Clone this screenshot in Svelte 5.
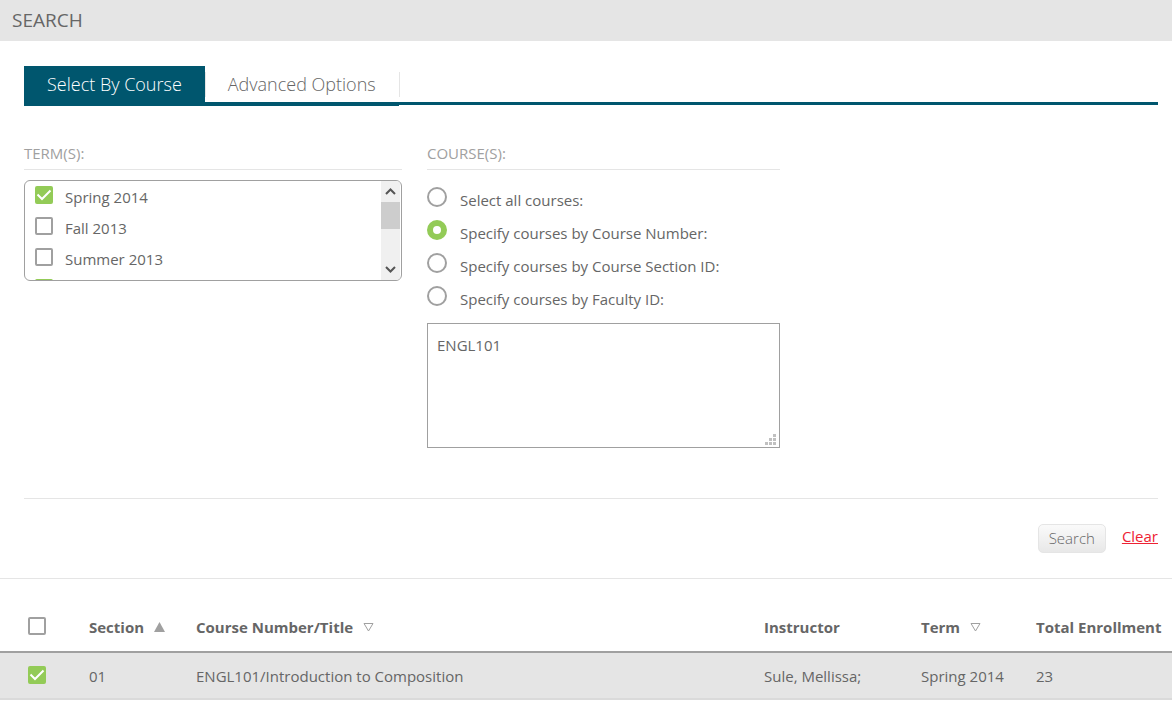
<script>
  let activeTab = $state('course');
  let searchBy = $state('number');
  let courseText = $state('ENGL101');

  const tabs = [
    { id: 'course', label: 'Select By Course' },
    { id: 'advanced', label: 'Advanced Options' }
  ];

  let terms = $state([
    { name: 'Spring 2014', checked: true },
    { name: 'Fall 2013', checked: false },
    { name: 'Summer 2013', checked: false },
    { name: 'Spring 2013', checked: true }
  ]);

  const searchOptions = [
    { value: 'all', label: 'Select all courses:' },
    { value: 'number', label: 'Specify courses by Course Number:' },
    { value: 'section', label: 'Specify courses by Course Section ID:' },
    { value: 'faculty', label: 'Specify courses by Faculty ID:' }
  ];

  const columns = [
    { key: 'section', label: 'Section', sort: 'asc' },
    { key: 'course', label: 'Course Number/Title', sort: 'none' },
    { key: 'instructor', label: 'Instructor' },
    { key: 'term', label: 'Term', sort: 'none' },
    { key: 'total', label: 'Total Enrollment' }
  ];

  let rows = $state([
    {
      section: '01',
      course: 'ENGL101/Introduction to Composition',
      instructor: 'Sule, Mellissa;',
      term: 'Spring 2014',
      total: 23,
      selected: true
    }
  ]);

  let allSelected = $state(false);

  function selectAll() {
    rows.forEach((row) => (row.selected = allSelected));
  }

  function clear(e) {
    e.preventDefault();
    courseText = '';
  }
</script>

{#snippet tick()}
  <svg class="tick" viewBox="0 0 18 18" aria-hidden="true">
    <path d="M2.500 8.500l4.500 4.500 8.500-8.500" />
  </svg>
{/snippet}

<header class="title-bar">
  <h1>SEARCH</h1>
</header>

<main>
  <form class="search" onsubmit={(e) => e.preventDefault()}>
    <div class="tab-bar">
      <div class="tabs" role="tablist">
        {#each tabs as tab}
          <button
            type="button"
            role="tab"
            class="tab"
            class:active={activeTab === tab.id}
            aria-selected={activeTab === tab.id}
            onclick={() => (activeTab = tab.id)}
          >{tab.label}</button>
        {/each}
      </div>
      <div class="tab-line"></div>
    </div>

    <div class="filters">
      <section class="terms">
        <h2>TERM(S):</h2>
        <div class="term-box">
          <div class="term-list">
            {#each terms as term}
              <label class="term">
                <span class="check">
                  <input type="checkbox" bind:checked={term.checked} />
                  {@render tick()}
                </span>
                <span>{term.name}</span>
              </label>
            {/each}
          </div>
          <div class="scrollbar" aria-hidden="true">
            <svg viewBox="0 0 19 21"><path d="M5 13l4.500-4.500 4.500 4.500" /></svg>
            <div class="thumb"></div>
            <svg class="down" viewBox="0 0 19 21"><path d="M5 8l4.500 4.500 4.500-4.500" /></svg>
          </div>
        </div>
      </section>

      <section class="courses">
        <h2 id="courses-title">COURSE(S):</h2>
        <div class="options" role="radiogroup" aria-labelledby="courses-title">
          {#each searchOptions as option}
            <label class="option">
              <input type="radio" name="searchBy" value={option.value} bind:group={searchBy} />
              <span>{option.label}</span>
            </label>
          {/each}
        </div>
        <div class="course-text">
          <textarea aria-labelledby="courses-title" spellcheck="false" bind:value={courseText}></textarea>
          <svg class="grip" viewBox="0 0 11 11" aria-hidden="true">
            <path d="M8 0h3v3h-3zM4 4h3v3h-3zM8 4h3v3h-3zM0 8h3v3h-3zM4 8h3v3h-3zM8 8h3v3h-3z" />
          </svg>
        </div>
      </section>
    </div>

    <div class="actions">
      <button type="submit" class="search-btn">Search</button>
      <a href="#clear" onclick={clear}>Clear</a>
    </div>
  </form>

  <table>
    <colgroup>
      <col class="col-check" />
      {#each columns as column}
        <col class="col-{column.key}" />
      {/each}
    </colgroup>
    <thead>
      <tr>
        <th>
          <span class="check">
            <input type="checkbox" aria-label="Select all" bind:checked={allSelected} onchange={selectAll} />
            {@render tick()}
          </span>
        </th>
        {#each columns as column}
          <th scope="col">
            <span class="heading">
              {column.label}
              {#if column.sort === 'asc'}
                <svg class="sort" viewBox="0 0 11 10"><path class="filled" d="M5.500 0l5.500 10h-11z" /></svg>
              {:else if column.sort}
                <svg class="sort" viewBox="0 0 11 10"><path d="M1 1.500h9l-4.500 7.500z" /></svg>
              {/if}
            </span>
          </th>
        {/each}
      </tr>
    </thead>
    <tbody>
      {#each rows as row}
        <tr class:selected={row.selected}>
          <td>
            <span class="check">
              <input type="checkbox" aria-label="Select section {row.section}" bind:checked={row.selected} />
              {@render tick()}
            </span>
          </td>
          {#each columns as column}
            <td>{row[column.key]}</td>
          {/each}
        </tr>
      {/each}
    </tbody>
  </table>
</main>

<style>
  :global(body) {
    background: #fff;
    color: #666;
    font-family: 'Open Sans', 'Noto Sans', sans-serif;
    font-size: 15px;
    line-height: 20px;
  }

  .title-bar {
    background: #e5e5e5;
    padding: 8px 12px 9px;
  }

  h1 {
    margin: 0;
    font-size: 19px;
    line-height: 24px;
    font-weight: 400;
  }

  .search {
    padding: 25px 14px 25px 24px;
    border-bottom: 1px solid #e5e5e5;
  }

  /* tabs */
  .tab-bar {
    display: flex;
  }

  .tabs {
    display: flex;
    align-items: flex-end;
    border-bottom: 4px solid #00566e;
  }

  .tab {
    position: relative;
    height: 36px;
    padding: 0 23px;
    border: 0;
    background: none;
    color: #666;
    font-family: inherit;
    font-size: 18px;
    font-weight: 300;
    cursor: pointer;
  }

  .tab::after {
    content: '';
    position: absolute;
    top: 6px;
    right: -1px;
    width: 1px;
    height: 25px;
    background: #e5e5e5;
  }

  .tab.active {
    background: #00566e;
    color: #fff;
  }

  .tab-line {
    flex: 1;
    height: 36px;
    border-bottom: 3px solid #00566e;
  }

  /* filters */
  .filters {
    display: flex;
    gap: 25px;
    padding: 36px 0 50px;
    border-bottom: 1px solid #e5e5e5;
  }

  .terms {
    flex: 0 1 378px;
  }

  .courses {
    flex: 0 1 353px;
  }

  h2 {
    margin: 0 0 10px;
    padding: 1px 0 6px;
    border-bottom: 1px solid #e5e5e5;
    color: #a0a0a0;
    font-size: 15px;
    line-height: 20px;
    font-weight: 400;
  }

  .term-box {
    display: flex;
    box-sizing: border-box;
    height: 101px;
    border: 1px solid #a0a0a0;
    border-radius: 6px;
    overflow: hidden;
  }

  .term-list {
    flex: 1;
    padding: 5px 10px;
    overflow-y: auto;
    scrollbar-width: none;
  }

  .term {
    display: flex;
    gap: 12px;
    height: 31px;
    line-height: 22px;
  }

  .check {
    position: relative;
    display: block;
    width: 18px;
    height: 18px;
  }

  .check input {
    appearance: none;
    display: block;
    box-sizing: border-box;
    width: 18px;
    height: 18px;
    margin: 0;
    border: 2px solid #a0a0a0;
    border-radius: 2px;
    background: #fff;
  }

  .check input:checked {
    border-color: #93cb57;
    background: #93cb57;
  }

  .tick {
    position: absolute;
    inset: 0;
    display: none;
    pointer-events: none;
    fill: none;
    stroke: #fff;
    stroke-width: 2;
  }

  .check input:checked + .tick {
    display: block;
  }

  .scrollbar {
    display: flex;
    flex-direction: column;
    width: 19px;
    margin-right: 1px;
    background: #f0f0f0;
  }

  .scrollbar svg {
    width: 19px;
    height: 21px;
    fill: none;
    stroke: #555;
    stroke-width: 2;
  }

  .scrollbar .down {
    margin-top: auto;
  }

  .thumb {
    height: 27px;
    background: #cdcdcd;
  }

  .options {
    padding: 7px 0 4px;
  }

  .option {
    display: flex;
    gap: 13px;
    height: 33px;
    line-height: 26px;
  }

  .option input {
    appearance: none;
    box-sizing: border-box;
    flex: none;
    width: 20px;
    height: 20px;
    margin: 0;
    border: 2px solid #a0a0a0;
    border-radius: 50%;
    background: #fff;
  }

  .option input:checked {
    border: 6px solid #93cb57;
  }

  .course-text {
    position: relative;
  }

  textarea {
    display: block;
    box-sizing: border-box;
    width: 100%;
    height: 125px;
    padding: 11px 9px;
    border: 1px solid #a0a0a0;
    color: #666;
    font: inherit;
    resize: none;
  }

  .grip {
    position: absolute;
    right: 4px;
    bottom: 3px;
    width: 11px;
    height: 11px;
    fill: #c0c0c0;
  }

  .actions {
    display: flex;
    justify-content: flex-end;
    gap: 16px;
    padding-top: 25px;
  }

  .search-btn {
    height: 29px;
    padding: 0 10px 2px;
    border: 1px solid #e5e5e5;
    border-radius: 5px;
    background: linear-gradient(#fafafa, #e8e8e8);
    color: #666;
    font-family: inherit;
    font-size: 15px;
    font-weight: 300;
    cursor: pointer;
  }

  .actions a {
    color: #ee2233;
    line-height: 25px;
  }

  /* results */
  table {
    width: 100%;
    margin-top: 24px;
    table-layout: fixed;
    border-collapse: separate;
    border-spacing: 0;
  }

  .col-check {
    width: 89px;
  }

  .col-section {
    width: 107px;
  }

  .col-instructor {
    width: 157px;
  }

  .col-term {
    width: 115px;
  }

  .col-total {
    width: 136px;
  }

  th,
  td {
    padding: 0;
    text-align: left;
    white-space: nowrap;
  }

  th {
    height: 48px;
    border-bottom: 2px solid #a0a0a0;
    font-weight: 700;
  }

  td {
    height: 45px;
    border-bottom: 2px solid #dadada;
  }

  th:first-child,
  td:first-child {
    padding-left: 28px;
    padding-bottom: 2px;
  }

  th:first-child {
    height: 46px;
  }

  td:first-child {
    height: 43px;
  }

  .selected td {
    background: #e5e5e5;
  }

  .heading {
    display: flex;
    align-items: center;
    gap: 10px;
  }

  .sort {
    width: 11px;
    height: 10px;
    fill: none;
    stroke: #a0a0a0;
  }

  .sort .filled {
    fill: #a0a0a0;
    stroke: none;
  }
</style>
